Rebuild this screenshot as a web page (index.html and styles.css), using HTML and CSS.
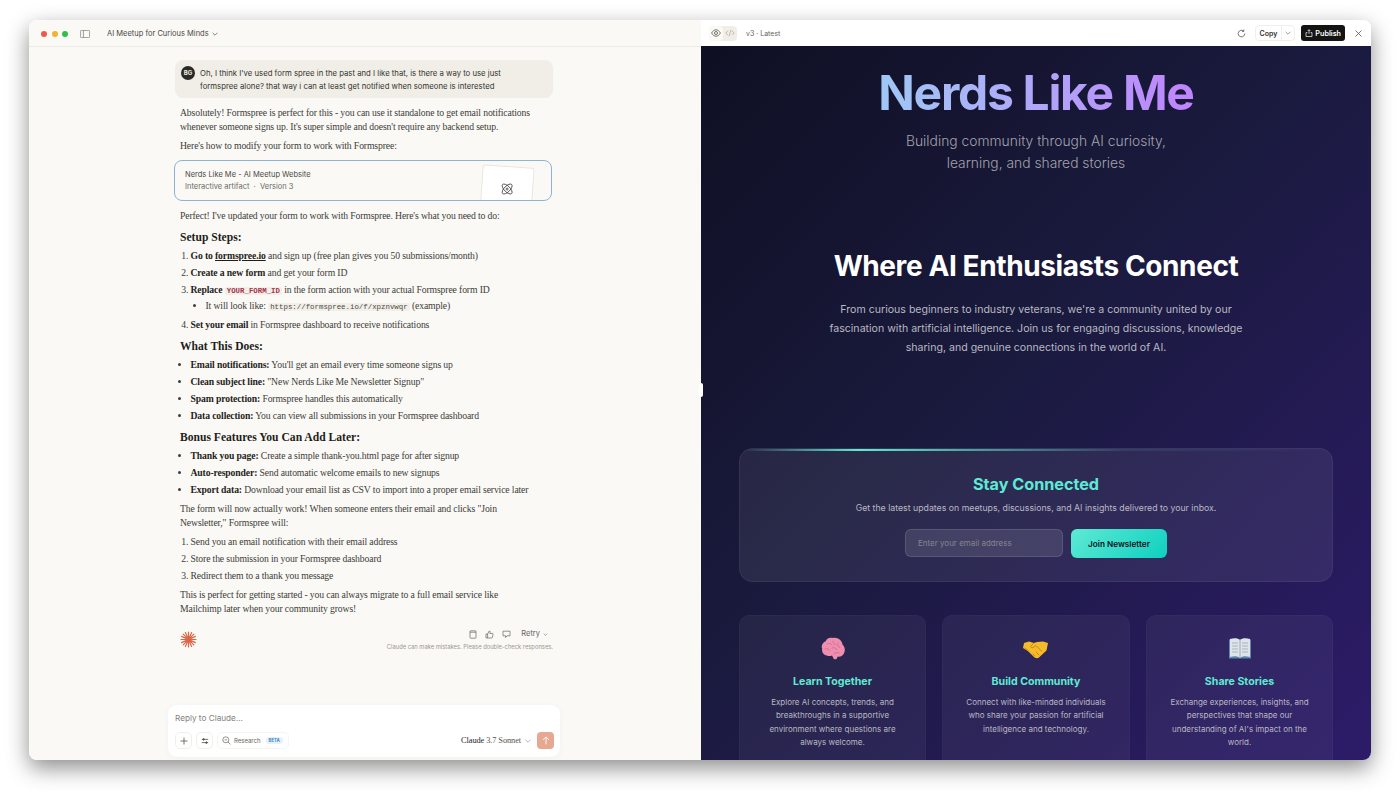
FILE: index.html
```html
<!DOCTYPE html>
<html lang="en">
<head>
  <meta charset="UTF-8">
  <title>AI Meetup for Curious Minds</title>
  <link rel="stylesheet" href="styles.css">
</head>
<body>
  <div class="window">
    <section class="chat-pane">
      <header class="chat-header">
        <div class="lights"><i class="red"></i><i class="yellow"></i><i class="green"></i></div>
        <svg class="sidebar-icon" width="10" height="8" viewBox="0 0 10 8" fill="none" stroke="#77756e" stroke-width=".7"><rect x=".4" y=".4" width="9.2" height="7.2" rx="1"/><path d="M3.4.4v7.2"/></svg>
        <span class="chat-title">AI Meetup for Curious Minds</span>
        <svg width="6" height="4" viewBox="0 0 6 4" fill="none" stroke="#55534d" stroke-width=".7"><path d="M.6.8 3 3.2 5.4.8"/></svg>
      </header>

      <div class="thread">
        <div class="user-msg">
          <span class="avatar">BG</span>
          <p>Oh, I think I've used form spree in the past and I like that, is there a way to use just<br>formspree alone? that way i can at least get notified when someone is interested</p>
        </div>

        <p class="para first">Absolutely! Formspree is perfect for this - you can use it standalone to get email notifications<br>whenever someone signs up. It's super simple and doesn't require any backend setup.</p>
        <p class="para tight">Here's how to modify your form to work with Formspree:</p>

        <div class="artifact">
          <div class="artifact-name">Nerds Like Me - AI Meetup Website</div>
          <div class="artifact-meta">Interactive artifact &nbsp;·&nbsp; Version 3</div>
          <div class="artifact-thumb">
            <svg width="14" height="14" viewBox="0 0 14 14" fill="none" stroke="#3a3a38" stroke-width=".8"><ellipse cx="7" cy="7" rx="6.4" ry="2.9" transform="rotate(45 7 7)"/><ellipse cx="7" cy="7" rx="6.4" ry="2.9" transform="rotate(-45 7 7)"/><circle cx="7" cy="7" r="1"/></svg>
          </div>
        </div>

        <p class="para after-card">Perfect! I've updated your form to work with Formspree. Here's what you need to do:</p>

        <h3 class="sec">Setup Steps:</h3>
        <ol class="list">
          <li><b>Go to <u>formspree.io</u></b> and sign up (free plan gives you 50 submissions/month)</li>
          <li><b>Create a new form</b> and get your form ID</li>
          <li><b>Replace</b> <code class="red-code">YOUR_FORM_ID</code> in the form action with your actual Formspree form ID
            <ul class="sub"><li>It will look like: <code>https://formspree.io/f/xpznvwqr</code> (example)</li></ul>
          </li>
          <li><b>Set your email</b> in Formspree dashboard to receive notifications</li>
        </ol>

        <h3 class="sec">What This Does:</h3>
        <ul class="list">
          <li><b>Email notifications:</b> You'll get an email every time someone signs up</li>
          <li><b>Clean subject line:</b> "New Nerds Like Me Newsletter Signup"</li>
          <li><b>Spam protection:</b> Formspree handles this automatically</li>
          <li><b>Data collection:</b> You can view all submissions in your Formspree dashboard</li>
        </ul>

        <h3 class="sec">Bonus Features You Can Add Later:</h3>
        <ul class="list">
          <li><b>Thank you page:</b> Create a simple thank-you.html page for after signup</li>
          <li><b>Auto-responder:</b> Send automatic welcome emails to new signups</li>
          <li><b>Export data:</b> Download your email list as CSV to import into a proper email service later</li>
        </ul>

        <p class="para tight">The form will now actually work! When someone enters their email and clicks "Join<br>Newsletter," Formspree will:</p>
        <ol class="list">
          <li>Send you an email notification with their email address</li>
          <li>Store the submission in your Formspree dashboard</li>
          <li>Redirect them to a thank you message</li>
        </ol>
        <p class="para tight">This is perfect for getting started - you can always migrate to a full email service like<br>Mailchimp later when your community grows!</p>

        <div class="msg-foot">
          <svg class="spark" width="17" height="17" viewBox="0 0 17 17" stroke="#d9674a" stroke-width="1.2" stroke-linecap="round"><path d="M8.5 1v15M1 8.5h15M3.2 3.2l10.6 10.6M13.8 3.2 3.2 13.8M5.4 1.6l6.2 13.8M11.6 1.6 5.4 15.4M1.6 5.4l13.8 6.2M15.4 5.4 1.6 11.6"/></svg>
          <div class="foot-right">
            <div class="actions">
              <svg width="8" height="9" viewBox="0 0 8 9" fill="none" stroke="#66645e" stroke-width=".7"><rect x="1" y=".8" width="6" height="7.4" rx=".8"/><path d="M1 2.2h6"/></svg>
              <svg width="9" height="9" viewBox="0 0 9 9" fill="none" stroke="#66645e" stroke-width=".7"><path d="M1 4h1.6v4H1zM2.6 4 4.2 1c.8 0 1 .6.8 1.4L4.8 3.4h2.6c.5 0 .7.4.6.8l-.6 3.2c-.1.4-.3.6-.7.6H2.6"/></svg>
              <svg width="9" height="9" viewBox="0 0 9 9" fill="none" stroke="#66645e" stroke-width=".7"><path d="M1 1.2h7v4.6H5L3.6 7.6V5.8H1z"/></svg>
              <span class="retry">Retry</span>
              <svg width="5" height="3" viewBox="0 0 6 4" fill="none" stroke="#77756e" stroke-width=".8"><path d="M.6.8 3 3.2 5.4.8"/></svg>
            </div>
            <div class="disclaimer">Claude can make mistakes. Please double-check responses.</div>
          </div>
        </div>
      </div>

      <div class="composer">
        <div class="reply-hint">Reply to Claude...</div>
        <div class="composer-row">
          <span class="tool-btn"><svg width="8" height="8" viewBox="0 0 8 8" stroke="#55534d" stroke-width=".8"><path d="M4 .5v7M.5 4h7"/></svg></span>
          <span class="tool-btn"><svg width="8" height="8" viewBox="0 0 8 8" fill="none" stroke="#55534d" stroke-width=".8"><path d="M.8 2.4h6.4M.8 5.6h6.4"/><circle cx="2.6" cy="2.4" r=".8" fill="#55534d"/><circle cx="5.4" cy="5.6" r=".8" fill="#55534d"/></svg></span>
          <span class="research">
            <svg width="9" height="9" viewBox="0 0 9 9" fill="none" stroke="#66645e" stroke-width=".7"><circle cx="3.8" cy="3.8" r="3"/><path d="M6 6l2.4 2.4M2.6 3.8h2.4"/></svg>
            Research <em>BETA</em>
          </span>
          <span class="model"><b>Claude</b> 3.7 Sonnet</span>
          <svg width="6" height="4" viewBox="0 0 6 4" fill="none" stroke="#88867f" stroke-width=".6"><path d="M.6.8 3 3.2 5.4.8"/></svg>
          <span class="send"><svg width="8" height="9" viewBox="0 0 8 9" fill="none" stroke="#fff" stroke-width=".9"><path d="M4 8.4V1M1 3.8 4 .9l3 2.9"/></svg></span>
        </div>
      </div>
    </section>

    <span class="pane-handle"></span>

    <section class="preview-pane">
      <header class="preview-bar">
        <div class="view-toggle">
          <span class="toggle-on"><svg width="10" height="8" viewBox="0 0 10 8" fill="none" stroke="#55534d" stroke-width=".8"><path d="M.6 4C2 1.6 3.4.8 5 .8s3 .8 4.4 3.2C8 6.4 6.600 7.200 5 7.200S2 6.400.6 4z"/><circle cx="5" cy="4" r="1.500"/></svg></span>
          <span class="toggle-off"><svg width="10" height="8" viewBox="0 0 10 8" fill="none" stroke="#a8a59c" stroke-width=".7"><path d="M3 1.800.8 4 3 6.200M7 1.800 9.200 4 7 6.200M6 .8 4 7.200"/></svg></span>
        </div>
        <span class="version">v3 · Latest</span>
        <span class="bar-spacer"></span>
        <svg width="9" height="9" viewBox="0 0 9 9" fill="none" stroke="#55534d" stroke-width=".8"><path d="M7.800 4.500A3.300 3.300 0 1 1 6.600 2M6.800.6V2.400H5"/></svg>
        <span class="copy-btn"><span class="copy-label">Copy</span><span class="copy-caret"><svg width="6" height="4" viewBox="0 0 6 4" fill="none" stroke="#77756e" stroke-width=".7"><path d="M.6.8 3 3.200 5.400.8"/></svg></span></span>
        <span class="publish-btn">
          <svg width="8" height="8" viewBox="0 0 8 8" fill="none" stroke="#fff" stroke-width=".7"><path d="M2.400 3.600H1v3.900h6V3.600H5.600M4 5V.8M2.600 2 4 .6 5.400 2"/></svg>
          Publish
        </span>
        <svg class="close-icon" width="7" height="7" viewBox="0 0 7 7" stroke="#55534d" stroke-width=".8"><path d="M.5.5l6 6M6.500.5l-6 6"/></svg>
      </header>

      <div class="site">
        <h1 class="site-title">Nerds Like Me</h1>
        <p class="site-tagline">Building community through AI curiosity,<br>learning, and shared stories</p>

        <h2 class="hero-title">Where AI Enthusiasts Connect</h2>
        <p class="hero-text">From curious beginners to industry veterans, we're a community united by our<br>fascination with artificial intelligence. Join us for engaging discussions, knowledge<br>sharing, and genuine connections in the world of AI.</p>

        <div class="newsletter">
          <h3>Stay Connected</h3>
          <p>Get the latest updates on meetups, discussions, and AI insights delivered to your inbox.</p>
          <form class="signup">
            <input type="email" placeholder="Enter your email address">
            <button type="button">Join Newsletter</button>
          </form>
        </div>

        <div class="features">
          <div class="feature">
            <svg class="feature-icon" width="28" height="28" viewBox="0 0 28 28"><path d="M14 3C10.500 2 7.500 3.500 6.800 6.200 3.500 7.500 2 11 3.200 13.800 2.500 17 4.500 20 7.800 20.500c2 .8 3.700.6 5.200-.1 1 .8 1 3.400 2.500 3.900 1.700.3 2.800-.6 2.800-2.600 3.700.5 6.300-1.500 7.200-4.700 1-3.200-.3-5.800-1.900-7.300C23 5.600 18.800 2 14 3z" fill="#ee8fb0"/><path d="M8 9c2-1.500 4 0 5 1M6 14c2-1 4 0 5 1.500M14 6c0 3 2 3 3 4M19 8c-1 2 0 4 2 4.500M13 13c2-1 4 0 5 2M15 19c1-1.500 3-2 5-1" fill="none" stroke="#d06b92" stroke-width=".9" stroke-linecap="round"/></svg>
            <h4>Learn Together</h4>
            <p>Explore AI concepts, trends, and breakthroughs in a supportive environment where questions are always welcome.</p>
          </div>
          <div class="feature">
            <svg class="feature-icon" width="28" height="28" viewBox="0 0 28 28"><path d="M2 8l5-1.500 5 1.500 3-1 6-.5 5 1.500-1.500 7.500-7 6.500c-1.500 1.500-3 1.500-5 .5l-6-6L1 13z" fill="#f6bb2c"/><path d="M12 8l-3.500 3.500c.5 1.500 2.500 1.500 3.500.5l2-1.500 6 6M11 19l2 2M14 17l3 3M3 13l4 3.500" fill="none" stroke="#c98a10" stroke-width="1" stroke-linecap="round"/></svg>
            <h4>Build Community</h4>
            <p>Connect with like-minded individuals who share your passion for artificial intelligence and technology.</p>
          </div>
          <div class="feature">
            <svg class="feature-icon" width="28" height="28" viewBox="0 0 28 28"><path d="M3 4.500h22v19H3z" fill="#5b88ad"/><path d="M4 4c4-1 8-1 10 1 2-2 6-2 10-1v18c-4-1-8-1-10 1-2-2-6-2-10-1z" fill="#dfe4ea"/><path d="M14 5v18" stroke="#8d99a6" stroke-width=".8"/><path d="M6 8h6M6 11h6M6 14h6M6 17h6M16 8h6M16 11h6M16 14h6M16 17h6" stroke="#aab2bb" stroke-width="1"/></svg>
            <h4>Share Stories</h4>
            <p>Exchange experiences, insights, and perspectives that shape our understanding of AI's impact on the world.</p>
          </div>
        </div>
      </div>
    </section>
  </div>
</body>
</html>
```

FILE: styles.css
```css
* {
  box-sizing: border-box;
}
body {
  margin: 0;
  padding: 20px 29px 0;
  height: 799px;
  overflow: hidden;
  background: #fff;
  font-family: Inter, "Noto Sans", sans-serif;
}
.window {
  position: relative;
  display: grid;
  grid-template-columns: 672px 670px;
  height: 740px;
  border-radius: 8px;
  overflow: hidden;
  box-shadow: 0 8px 22px rgba(0,0,0,0.45);
}

/* left side */
.chat-pane {
  display: flex;
  flex-direction: column;
  background: #faf9f5;
  height: 740px;
}
.chat-header {
  display: flex;
  align-items: center;
  height: 27px;
  flex: none;
  padding: 1px 0 0 12px;
  border-bottom: 1px solid #ecebe5;
  color: #4a4944;
  font-size: 7.5px;
}
.lights {
  display: flex;
  gap: 4.5px;
}
.lights i {
  width: 6px;
  height: 6px;
  border-radius: 50%;
}
.lights .red { background: #f0584f; }
.lights .yellow { background: #f4b32b; }
.lights .green { background: #2fc04a; }
.sidebar-icon {
  margin: 0 17px 0 12px;
}
.chat-title {
  margin-right: 3px;
}
.thread {
  flex: 1;
  width: 378px;
  margin-left: 146px;
  padding-top: 13px;
  font-family: "Liberation Serif", serif;
  font-size: 9.7px;
  letter-spacing: -0.13px;
  line-height: 14px;
  color: #3d3d3a;
}
.user-msg {
  display: flex;
  gap: 5px;
  height: 38px;
  padding: 6px 6px;
  background: #f0eee6;
  border-radius: 8px;
  font-family: Inter, sans-serif;
  font-size: 7.75px;
  letter-spacing: 0;
  line-height: 13px;
  color: #33322e;
}
.user-msg p {
  margin: 1px 0 0;
}
.avatar {
  flex: none;
  width: 14px;
  height: 14px;
  border-radius: 50%;
  background: #2b2a27;
  color: #f0eee6;
  font-size: 6px;
  font-weight: 700;
  line-height: 14px;
  text-align: center;
}
.para {
  margin: 0;
  padding-left: 5px;
}
.para.first {
  margin-top: 8px;
}
.para.tight {
  margin-top: 5px;
  margin-bottom: 5px;
}
.artifact {
  position: relative;
  height: 41px;
  margin: 7px 1px 8px -1px;
  padding: 8px 10px;
  background: #faf9f5;
  border: 1px solid #8fb3d0;
  border-radius: 8px;
  overflow: hidden;
  font-family: Inter, sans-serif;
  font-size: 7.5px;
  letter-spacing: 0;
  line-height: 12px;
  color: #4a4944;
}
.artifact-meta {
  color: #6c6a63;
}
.artifact-thumb {
  position: absolute;
  left: 306px;
  top: 5px;
  width: 52px;
  height: 50px;
  padding: 15px 0 0 18px;
  background: #fff;
  border: 1px solid #e8e6df;
  border-radius: 3px;
  transform: rotate(4deg);
}
.artifact-thumb svg {
  transform: rotate(-4deg);
}
.sec {
  margin: 8px 0 4px;
  padding-left: 5px;
  font-size: 11.6px;
  letter-spacing: 0;
  line-height: 14px;
  font-weight: 700;
  color: #1f1e1b;
}
.list {
  margin: 0;
  padding: 0 0 0 15.5px;
  list-style-position: outside;
}
.list > li {
  margin-bottom: 3px;
}
.list b {
  color: #1f1e1b;
}
.sub {
  margin: 1px 0 4px;
  padding-left: 15px;
  list-style: disc;
}
code {
  padding: 0 2px;
  background: #f1efe8;
  border-radius: 2px;
  font-family: "Liberation Mono", monospace;
  font-size: 7.4px;
  letter-spacing: 0;
  color: #4a4944;
}
code.red-code {
  color: #a8324a;
  font-weight: 700;
}
.msg-foot {
  display: flex;
  justify-content: space-between;
  margin-top: 15px;
  padding: 0 0 0 5px;
}
.foot-right {
  margin-top: -4px;
  text-align: right;
}
.actions {
  display: flex;
  justify-content: flex-end;
  align-items: center;
  gap: 8px;
  height: 14px;
  padding-right: 5px;
  font-family: Inter, sans-serif;
  font-size: 7.5px;
  letter-spacing: 0;
  color: #66645e;
}
.retry {
  margin-left: 2px;
  margin-right: -5px;
}
.disclaimer {
  font-family: Inter, sans-serif;
  font-size: 5.8px;
  letter-spacing: 0;
  line-height: 12px;
  color: #9a988f;
}
.composer {
  flex: none;
  width: 392px;
  height: 52px;
  margin: 0 0 3px 139px;
  padding: 6px 6px 0 7px;
  background: #fff;
  border-radius: 9px;
  box-shadow: 0 1px 6px rgba(0,0,0,0.04);
}
.reply-hint {
  font-size: 8.2px;
  line-height: 14px;
  color: #84827a;
}
.composer-row {
  display: flex;
  align-items: center;
  gap: 4px;
  margin-top: 7px;
}
.tool-btn {
  display: flex;
  align-items: center;
  justify-content: center;
  width: 17px;
  height: 17px;
  border: 1px solid #f1efe9;
  border-radius: 5px;
}
.research {
  display: flex;
  align-items: center;
  gap: 3px;
  height: 17px;
  padding: 0 5px 0 4px;
  border: 1px solid #f6f5f0;
  border-radius: 5px;
  font-size: 6px;
  color: #66645e;
}
.research em {
  margin-left: 2px;
  padding: 1px 3px;
  background: #e8f1fa;
  border-radius: 3px;
  font-style: normal;
  font-weight: 700;
  font-size: 4.4px;
  color: #3d86c6;
}
.model {
  margin-left: auto;
  font-family: "Liberation Serif", serif;
  font-size: 8.4px;
  letter-spacing: -0.1px;
  color: #55534d;
}
.model b {
  font-weight: 400;
  color: #26251f;
}
.send {
  display: flex;
  align-items: center;
  justify-content: center;
  width: 17px;
  height: 17px;
  margin-left: 2px;
  background: #e6a891;
  border-radius: 4px;
}
.pane-handle {
  position: absolute;
  left: 670px;
  top: 363px;
  width: 4px;
  height: 14px;
  background: #fff;
  border-radius: 2px;
}

/* right side */
.preview-pane {
  display: flex;
  flex-direction: column;
  height: 740px;
  overflow: hidden;
  background: #fff;
}
.preview-bar {
  display: flex;
  align-items: center;
  flex: none;
  height: 26px;
  padding: 0 9px 0 8px;
  background: #fff;
  color: #55534d;
}
.view-toggle {
  display: flex;
  height: 15px;
  background: #f0eee6;
  border-radius: 4px;
}
.view-toggle span {
  display: flex;
  align-items: center;
  justify-content: center;
  width: 14px;
  border-radius: 4px;
}
.view-toggle .toggle-on {
  background: #faf9f5;
}
.version {
  margin-left: 9px;
  font-size: 7px;
  color: #66645e;
}
.bar-spacer {
  flex: 1;
}
.copy-btn {
  display: flex;
  align-items: center;
  height: 16px;
  margin: 0 6px 0 9px;
  border: 1px solid #f1efe9;
  border-radius: 4px;
}
.copy-label {
  padding: 0 4px;
  font-size: 7px;
  font-weight: 600;
  color: #33322e;
}
.copy-caret {
  display: flex;
  align-items: center;
  height: 100%;
  padding: 0 3px;
  border-left: 1px solid #f1efe9;
}
.publish-btn {
  display: flex;
  align-items: center;
  gap: 2px;
  height: 16px;
  padding: 0 4px;
  background: #141413;
  border-radius: 3px;
  font-size: 7.2px;
  font-weight: 600;
  color: #fff;
}
.close-icon {
  margin-left: 10px;
}
.site {
  flex: 1;
  min-height: 0;
  padding: 18px 38px 0;
  background: linear-gradient(135deg, #0f0f23 0%, #1a1a3e 45%, #2d1b69 100%);
  text-align: center;
}
.site-title {
  width: max-content;
  margin: 0 auto;
  font-size: 48px;
  line-height: 58px;
  font-weight: 700;
  letter-spacing: -1.3px;
  background: linear-gradient(90deg, #9fc8f5, #c084fc);
  -webkit-background-clip: text;
  background-clip: text;
  color: transparent;
}
.site-tagline {
  margin: 8px 0 0;
  font-size: 13.85px;
  font-weight: 300;
  line-height: 22px;
  color: #a3a3ad;
}
.hero-title {
  margin: 74px 0 0;
  font-size: 28px;
  line-height: 36px;
  font-weight: 700;
  letter-spacing: -0.4px;
  color: #fff;
}
.hero-text {
  margin: 16px 0 0;
  font-size: 10.6px;
  line-height: 19px;
  color: #b9b9c2;
}
.newsletter {
  position: relative;
  height: 134px;
  margin-top: 91px;
  padding-top: 25px;
  overflow: hidden;
  background: rgba(255,255,255,0.07);
  border: 1px solid rgba(255,255,255,0.06);
  border-radius: 14px;
}
.newsletter::before {
  content: "";
  position: absolute;
  left: 0;
  right: 0;
  top: 0;
  height: 2px;
  background: linear-gradient(90deg, transparent, #5eead4 20%, rgba(94,234,212,0.1) 65%, transparent);
}
.newsletter h3 {
  margin: 0;
  font-size: 16.2px;
  line-height: 20px;
  font-weight: 700;
  color: #5eead4;
}
.newsletter p {
  margin: 7px 0 0;
  font-size: 8.75px;
  line-height: 14px;
  color: #b9b9c2;
}
.signup {
  display: flex;
  justify-content: center;
  gap: 8px;
  margin-top: 14px;
}
.signup input {
  width: 158px;
  height: 28px;
  padding: 0 12px;
  background: rgba(255,255,255,0.11);
  border: 1px solid rgba(255,255,255,0.12);
  border-radius: 6px;
  font-family: inherit;
  font-size: 8px;
  outline: none;
}
.signup input::placeholder {
  color: #85858f;
}
.signup button {
  width: 96px;
  height: 29px;
  padding: 0;
  background: linear-gradient(135deg, #5eead4, #0fd0c0);
  border: none;
  border-radius: 6px;
  font-family: inherit;
  font-size: 8.2px;
  font-weight: 600;
  color: #0f0f23;
}
.features {
  display: grid;
  grid-template-columns: 187px 188px 187px;
  justify-content: space-between;
  margin-top: 33px;
}
.feature {
  height: 170px;
  padding: 19px 20px 0;
  background: rgba(255,255,255,0.05);
  border: 1px solid rgba(255,255,255,0.025);
  border-radius: 10px;
}
.feature-icon {
  display: block;
  margin: 0 auto;
}
.feature h4 {
  margin: 11px -10px 0;
  font-size: 10.6px;
  line-height: 16px;
  font-weight: 700;
  color: #5eead4;
}
.feature p {
  margin: 6px 0 0;
  font-size: 8px;
  line-height: 13.4px;
  color: #b9b9c2;
}
```
